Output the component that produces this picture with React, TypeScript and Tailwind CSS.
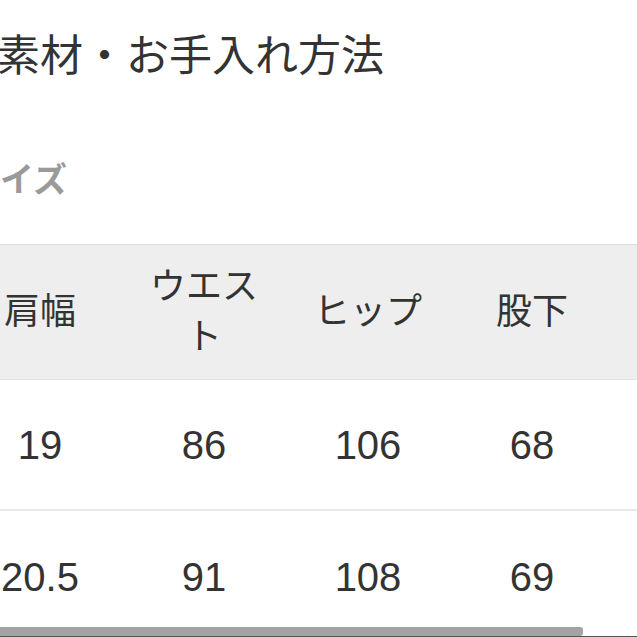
import React from "react";

const headers = ["肩幅", "ウエスト", "ヒップ", "股下", "裾幅"];
const rows = [
  ["19", "86", "106", "68", "20"],
  ["20.5", "91", "108", "69", "21"],
];

export default function App() {
  return (
    <div
      className="relative h-[637px] w-[637px] overflow-hidden bg-white text-[#333333]"
      style={{ fontFamily: '"Liberation Sans", "Noto Sans CJK JP", sans-serif' }}
    >
      <div className="pt-[35px]">
        <div className="ml-[-3px] h-[43px] whitespace-nowrap text-[43px] leading-[43px]">
          素材・お手入れ方法
        </div>
        <div className="ml-[-34px] mt-[85px] h-[34px] whitespace-nowrap text-[34px] font-bold leading-[34px] text-[#9a9a9a]">
          サイズ
        </div>
      </div>

      <div className="mt-[47px] ml-[-42px] w-[820px]">
        <div className="grid h-[136px] grid-cols-[repeat(5,164px)] border-y border-t-[#dcdcdc] border-b-[#e2e2e2] bg-[#eeeeee]">
          {headers.map((h) => (
            <div
              key={h}
              className="flex items-center justify-center px-4 text-center text-[36px] leading-[50px]"
            >
              {h}
            </div>
          ))}
        </div>
        {rows.map((r, i) => (
          <div
            key={i}
            className={
              "grid h-[131px] grid-cols-[repeat(5,164px)] " +
              (i === 0 ? "border-b-2 border-[#e8e8e8]" : "")
            }
          >
            {r.map((v, j) => (
              <div key={j} className="flex items-center justify-center text-[40px] leading-none">
                {v}
              </div>
            ))}
          </div>
        ))}
      </div>

      <div className="absolute bottom-0 left-0 right-0 h-[10px] border-b border-[#555555]">
        <div className="h-full w-[583px] rounded-r-[3px] bg-[#a3a3a3]" />
      </div>
    </div>
  );
}
